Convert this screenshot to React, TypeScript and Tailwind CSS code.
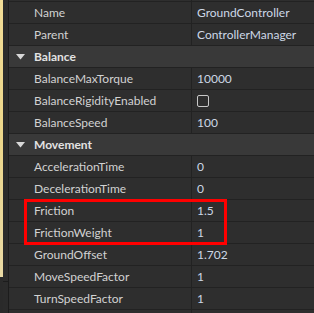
import React from "react";

type Item =
  | { kind: "header"; label: string }
  | { kind: "prop"; label: string; value?: string; checkbox?: boolean };

const items: Item[] = [
  { kind: "prop", label: "Name", value: "GroundController" },
  { kind: "prop", label: "Parent", value: "ControllerManager" },
  { kind: "header", label: "Balance" },
  { kind: "prop", label: "BalanceMaxTorque", value: "10000" },
  { kind: "prop", label: "BalanceRigidityEnabled", checkbox: true },
  { kind: "prop", label: "BalanceSpeed", value: "100" },
  { kind: "header", label: "Movement" },
  { kind: "prop", label: "AccelerationTime", value: "0" },
  { kind: "prop", label: "DecelerationTime", value: "0" },
  { kind: "prop", label: "Friction", value: "1.5" },
  { kind: "prop", label: "FrictionWeight", value: "1" },
  { kind: "prop", label: "GroundOffset", value: "1.702" },
  { kind: "prop", label: "MoveSpeedFactor", value: "1" },
  { kind: "prop", label: "TurnSpeedFactor", value: "1" },
];

export default function App() {
  return (
    <div
      className="relative flex w-[314px] h-[313px] overflow-hidden bg-[#2e2e2e] text-[12px]"
      style={{ fontFamily: "Lato, 'Noto Sans', sans-serif" }}
    >
      {/* left gutter */}
      <div className="flex w-[9px] shrink-0 flex-col">
        <div className="flex flex-1">
          <div className="flex w-[3px] flex-col">
            <div className="h-[277px] bg-gradient-to-b from-[#f1dc96] via-[#ecd68a] to-[#e9d9a4]" />
            <div className="flex-1 bg-[#2a2a2a]" />
          </div>
          <div className="flex w-[5px] flex-col bg-[#2b2b2b]">
            <div className="h-[281px]" />
            <div className="h-px bg-[#1c1c1c]" />
          </div>
          <div className="w-px bg-[#1c1c1c]" />
        </div>
      </div>

      {/* main */}
      <div className="flex flex-1 flex-col">
        <div className="flex h-[2px] border-b border-[#222222]">
          <div className="w-[182px]" />
          <div className="flex-1 border-l border-[#222222]" />
        </div>
        {items.map((it, i) =>
          it.kind === "header" ? (
            <div
              key={i}
              className="flex h-[22px] items-center border-b border-[#222222] bg-[#393939]"
            >
              <svg width="9" height="6" viewBox="0 0 9 6" className="ml-[7px]">
                <path d="M0 0 L9 0 L4.5 5.5 Z" fill="#d8d8d8" />
              </svg>
              <span className="ml-[9px] font-bold text-[#e2e2e2]">{it.label}</span>
            </div>
          ) : (
            <div key={i} className="flex h-[22px] border-b border-[#222222]">
              <div className="flex w-[182px] items-center pl-[25px] text-[#d2d2d2] whitespace-nowrap overflow-hidden">
                {it.label}
              </div>
              <div className="flex flex-1 items-center border-l border-[#222222] pl-[5px] text-[#cdd8e6]">
                {it.checkbox ? (
                  <div className="h-[12px] w-[12px] rounded-[2px] border-[1.5px] border-[#c8c8c8]" />
                ) : (
                  it.value
                )}
              </div>
            </div>
          )
        )}
        <div className="flex flex-1">
          <div className="w-[182px]" />
          <div className="flex-1 border-l border-[#222222]" />
        </div>
      </div>

      {/* red highlight box */}
      <div className="pointer-events-none absolute left-[24px] top-[199px] h-[46px] w-[203px] border-[3px] border-[#ff0000]" />
    </div>
  );
}
